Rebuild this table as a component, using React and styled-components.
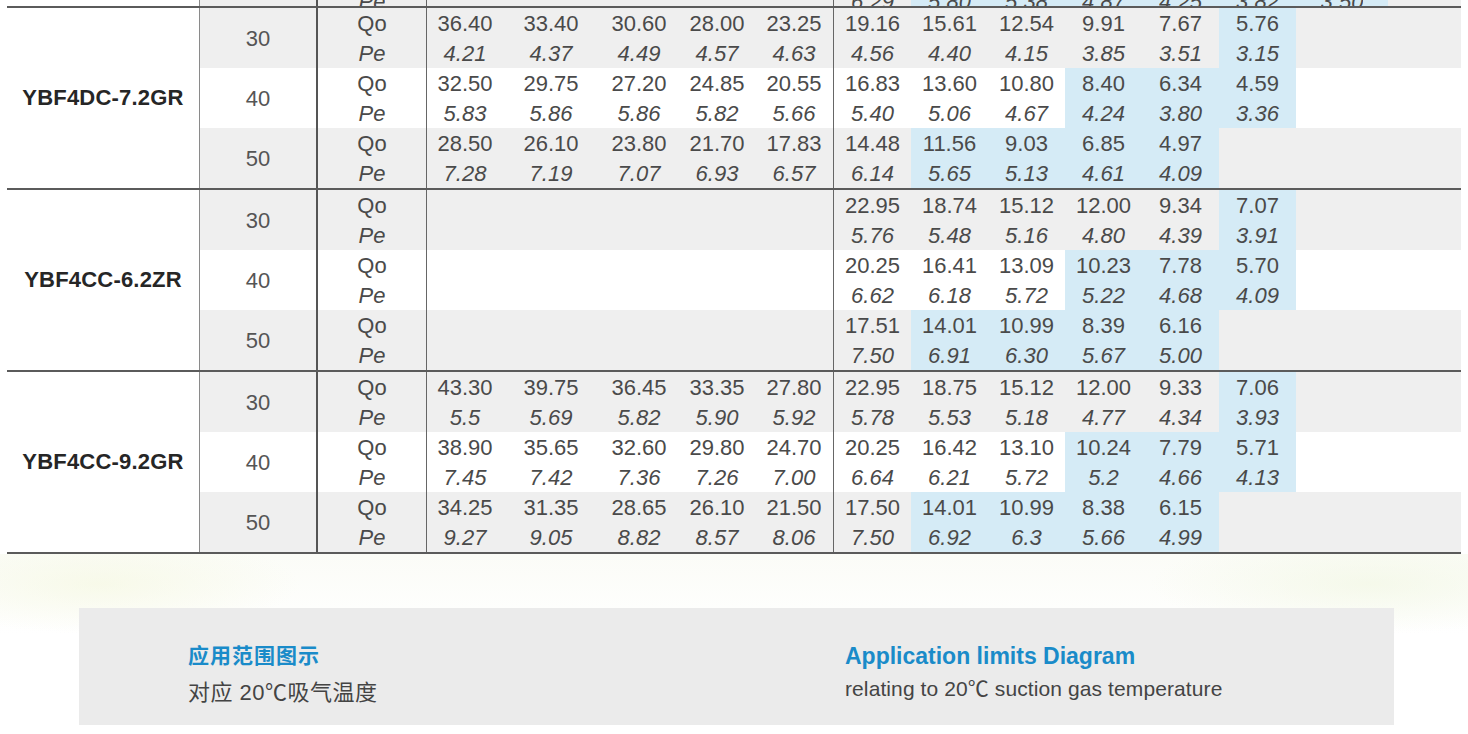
import React from 'react';
import styled, { createGlobalStyle } from 'styled-components';

const GROUP_A = [76, 96, 80, 76, 78];
const GROUP_B = [78, 77, 77, 77, 77, 77, 92];

const tail = {
  b: ['6.29', '5.80', '5.38', '4.87', '4.25', '3.82', '3.50'],
  hl: [1, 2, 3, 4, 5, 6],
};

const blocks = [
  {
    model: 'YBF4DC-7.2GR',
    rows: [
      {
        t: 30,
        a: [['36.40', '4.21'], ['33.40', '4.37'], ['30.60', '4.49'], ['28.00', '4.57'], ['23.25', '4.63']],
        b: [['19.16', '4.56'], ['15.61', '4.40'], ['12.54', '4.15'], ['9.91', '3.85'], ['7.67', '3.51'], ['5.76', '3.15']],
        hl: [5],
      },
      {
        t: 40,
        a: [['32.50', '5.83'], ['29.75', '5.86'], ['27.20', '5.86'], ['24.85', '5.82'], ['20.55', '5.66']],
        b: [['16.83', '5.40'], ['13.60', '5.06'], ['10.80', '4.67'], ['8.40', '4.24'], ['6.34', '3.80'], ['4.59', '3.36']],
        hl: [3, 4, 5],
      },
      {
        t: 50,
        a: [['28.50', '7.28'], ['26.10', '7.19'], ['23.80', '7.07'], ['21.70', '6.93'], ['17.83', '6.57']],
        b: [['14.48', '6.14'], ['11.56', '5.65'], ['9.03', '5.13'], ['6.85', '4.61'], ['4.97', '4.09']],
        hl: [1, 2, 3, 4],
      },
    ],
  },
  {
    model: 'YBF4CC-6.2ZR',
    rows: [
      {
        t: 30,
        a: [],
        b: [['22.95', '5.76'], ['18.74', '5.48'], ['15.12', '5.16'], ['12.00', '4.80'], ['9.34', '4.39'], ['7.07', '3.91']],
        hl: [5],
      },
      {
        t: 40,
        a: [],
        b: [['20.25', '6.62'], ['16.41', '6.18'], ['13.09', '5.72'], ['10.23', '5.22'], ['7.78', '4.68'], ['5.70', '4.09']],
        hl: [3, 4, 5],
      },
      {
        t: 50,
        a: [],
        b: [['17.51', '7.50'], ['14.01', '6.91'], ['10.99', '6.30'], ['8.39', '5.67'], ['6.16', '5.00']],
        hl: [1, 2, 3, 4],
      },
    ],
  },
  {
    model: 'YBF4CC-9.2GR',
    rows: [
      {
        t: 30,
        a: [['43.30', '5.5'], ['39.75', '5.69'], ['36.45', '5.82'], ['33.35', '5.90'], ['27.80', '5.92']],
        b: [['22.95', '5.78'], ['18.75', '5.53'], ['15.12', '5.18'], ['12.00', '4.77'], ['9.33', '4.34'], ['7.06', '3.93']],
        hl: [5],
      },
      {
        t: 40,
        a: [['38.90', '7.45'], ['35.65', '7.42'], ['32.60', '7.36'], ['29.80', '7.26'], ['24.70', '7.00']],
        b: [['20.25', '6.64'], ['16.42', '6.21'], ['13.10', '5.72'], ['10.24', '5.2'], ['7.79', '4.66'], ['5.71', '4.13']],
        hl: [3, 4, 5],
      },
      {
        t: 50,
        a: [['34.25', '9.27'], ['31.35', '9.05'], ['28.65', '8.82'], ['26.10', '8.57'], ['21.50', '8.06']],
        b: [['17.50', '7.50'], ['14.01', '6.92'], ['10.99', '6.3'], ['8.38', '5.66'], ['6.15', '4.99']],
        hl: [1, 2, 3, 4],
      },
    ],
  },
];

function DataCells({ widths, values, hl, split }) {
  return widths.map((w, i) => {
    const v = values[i];
    return (
      <Cell key={i} $w={w} $hl={hl && hl.includes(i)} $line={i === 0 && split}>
        {v && (
          <>
            <Line>{v[0]}</Line>
            <Line $italic>{v[1]}</Line>
          </>
        )}
      </Cell>
    );
  });
}

export default function App() {
  return (
    <Page>
      <GlobalStyle />
      <Table>
        {/* last line of the block above, cut by the top edge */}
        <TailRow>
          <ModelCell />
          <TempCell $tone="gray" />
          <LabelCell $tone="gray">
            <TailText><Line $italic $tail>Pe</Line></TailText>
          </LabelCell>
          <Group $tone="gray">
            {GROUP_A.map((w, i) => (
              <Cell key={i} $w={w} />
            ))}
            {GROUP_B.map((w, i) => (
              <Cell key={'b' + i} $w={w} $hl={tail.hl.includes(i)} $line={i === 0}>
                <TailText><Line $italic $tail>{tail.b[i]}</Line></TailText>
              </Cell>
            ))}
          </Group>
        </TailRow>

        {blocks.map((blk) => (
          <Block key={blk.model}>
            <ModelCell>{blk.model}</ModelCell>
            <Rows>
              {blk.rows.map((r, ri) => {
                const tone = ri === 1 ? 'white' : 'gray';
                return (
                  <Row key={r.t}>
                    <TempCell $tone={tone}>{r.t}</TempCell>
                    <LabelCell $tone={tone}>
                      <Line>Qo</Line>
                      <Line $italic>Pe</Line>
                    </LabelCell>
                    <Group $tone={tone}>
                      <DataCells widths={GROUP_A} values={r.a} />
                      <DataCells widths={GROUP_B} values={r.b} hl={r.hl} split />
                    </Group>
                  </Row>
                );
              })}
            </Rows>
          </Block>
        ))}
        <BottomRule />
      </Table>

      <Footer>
        <InfoBox>
          <InfoCol>
            <InfoTitle $cjk>应用范围图示</InfoTitle>
            <InfoSub $cjk>对应 20℃吸气温度</InfoSub>
          </InfoCol>
          <InfoCol>
            <InfoTitle>Application limits Diagram</InfoTitle>
            <InfoSub>relating to 20℃ suction gas temperature</InfoSub>
          </InfoCol>
        </InfoBox>
      </Footer>
    </Page>
  );
}

const GlobalStyle = createGlobalStyle`
  html, body {
    margin: 0;
    padding: 0;
    background: #ffffff;
  }
  body {
    font-family: "Liberation Sans", Arial, sans-serif;
    color: #4a4a4a;
  }
`;

const Page = styled.div`
  width: 1468px;
  height: 734px;
  overflow: hidden;
  background: #fff;
`;

const Table = styled.div`
  margin-left: 7px;
  width: 1454px;
`;

const bg = (tone) => (tone === 'gray' ? '#efefef' : '#ffffff');

const TailRow = styled.div`
  display: flex;
  height: 6px;
  overflow: hidden;
`;

const TailText = styled.div`
  display: flex;
  flex-direction: column;
  justify-content: flex-end;
  align-items: center;
  height: 6px;
  overflow: hidden;
`;

const Block = styled.div`
  display: flex;
  border-top: 2px solid #5b5b5b;
`;

const BottomRule = styled.div`
  border-top: 2px solid #5b5b5b;
`;

const ModelCell = styled.div`
  width: 192px;
  flex: none;
  display: flex;
  align-items: center;
  justify-content: center;
  font-weight: bold;
  font-size: 22px;
  color: #262626;
  letter-spacing: 0.2px;
`;

const Rows = styled.div`
  flex: 1;
  display: flex;
  flex-direction: column;
`;

const Row = styled.div`
  display: flex;
  height: 60px;
`;

const TempCell = styled.div`
  width: 117px;
  flex: none;
  box-sizing: border-box;
  border-left: 1px solid #8a8a8a;
  background: ${(p) => bg(p.$tone)};
  display: flex;
  align-items: center;
  justify-content: center;
  padding-top: 2px;
  font-size: 22px;
  color: #555;
`;

const LabelCell = styled.div`
  width: 111px;
  flex: none;
  box-sizing: border-box;
  border-left: 2px solid #555;
  border-right: 1px solid #666;
  background: ${(p) => bg(p.$tone)};
  display: flex;
  flex-direction: column;
  align-items: center;
`;

const Group = styled.div`
  flex: 1;
  display: flex;
  background: ${(p) => bg(p.$tone)};
`;

const Cell = styled.div`
  width: ${(p) => p.$w}px;
  flex: none;
  box-sizing: border-box;
  display: flex;
  flex-direction: column;
  align-items: center;
  background: ${(p) => (p.$hl ? '#d5ebf6' : 'transparent')};
  border-left: ${(p) => (p.$line ? '1px solid #666' : 'none')};
`;

const Line = styled.div`
  height: 30px;
  line-height: 31px;
  font-size: 22px;
  font-style: ${(p) => (p.$italic ? 'italic' : 'normal')};
  color: #4a4a4a;
  white-space: nowrap;
  flex: none;
  margin-bottom: ${(p) => (p.$tail ? '-10px' : '0')};
`;

const Footer = styled.div`
  height: 180px;
  padding-top: 54px;
  box-sizing: border-box;
  background:
    radial-gradient(ellipse 200px 50px at 100px 30px, rgba(244, 247, 222, 0.6), transparent),
    radial-gradient(ellipse 220px 50px at 1370px 30px, rgba(240, 246, 224, 0.6), transparent),
    linear-gradient(180deg, #fbfcf7 0%, #ffffff 45%);
`;

const InfoBox = styled.div`
  margin-left: 79px;
  width: 1315px;
  height: 117px;
  background: #ebebeb;
  display: grid;
  grid-template-columns: 657px 1fr;
  padding: 33px 0 0 109px;
  box-sizing: border-box;
`;

const InfoCol = styled.div`
  display: flex;
  flex-direction: column;
`;

const InfoTitle = styled.div`
  font-family: "Liberation Sans", "Noto Sans CJK SC", sans-serif;
  font-weight: bold;
  font-size: ${(p) => (p.$cjk ? '21px' : '23px')};
  color: #1a8bc9;
  height: 30px;
  line-height: 30px;
  letter-spacing: ${(p) => (p.$cjk ? '1px' : '0')};
`;

const InfoSub = styled.div`
  font-family: "Liberation Sans", "Noto Sans CJK SC", sans-serif;
  font-size: ${(p) => (p.$cjk ? '22px' : '21px')};
  letter-spacing: ${(p) => (p.$cjk ? '0.5px' : '0.1px')};
  color: #444;
  margin-top: ${(p) => (p.$cjk ? '8px' : '4px')};
  line-height: 28px;
`;
